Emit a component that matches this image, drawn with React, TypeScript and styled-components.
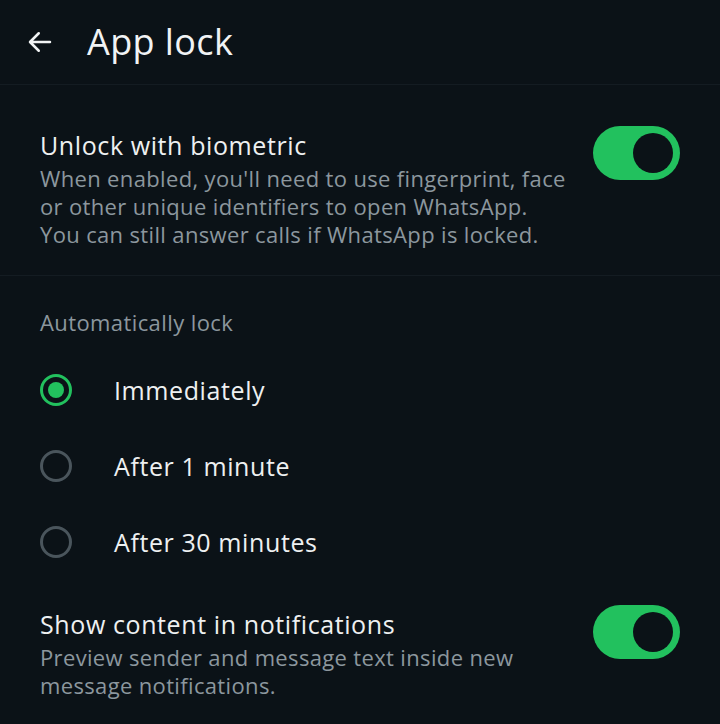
import React, { useState } from "react";
import styled, { createGlobalStyle } from "styled-components";

const GlobalStyle = createGlobalStyle`
  html, body {
    margin: 0;
    padding: 0;
    background: #0b1217;
  }
  body {
    font-family: "Open Sans", Roboto, "Liberation Sans", sans-serif;
    -webkit-font-smoothing: antialiased;
  }
`;

const Screen = styled.div`
  width: 720px;
  height: 724px;
  background: #0b1217;
  color: #e9edef;
  overflow: hidden;
  display: flex;
  flex-direction: column;
`;

const Header = styled.header`
  height: 85px;
  display: flex;
  align-items: center;
  gap: 31px;
  padding: 0 0 0 24px;
  border-bottom: 1px solid #141c22;
  box-sizing: border-box;
`;

const BackButton = styled.button`
  width: 32px;
  height: 32px;
  padding: 0;
  border: none;
  background: none;
  color: #f1f3f4;
  display: flex;
  align-items: center;
  justify-content: center;
`;

const Title = styled.h1`
  margin: 0;
  font-size: 36px;
  line-height: 40px;
  font-weight: 400;
  letter-spacing: 0.4px;
  color: #f1f3f4;
`;

const Section = styled.section<{ divided?: boolean }>`
  display: flex;
  flex-direction: column;
  border-bottom: ${(p) => (p.divided ? "1px solid #141c22" : "none")};
`;

const ToggleRow = styled.div<{ top: number; bottom: number }>`
  display: flex;
  align-items: flex-start;
  justify-content: space-between;
  padding: ${(p) => p.top}px 40px ${(p) => p.bottom}px 40px;
`;

const TextBlock = styled.div`
  display: flex;
  flex-direction: column;
  padding-top: 4px;
`;

const ItemTitle = styled.div`
  font-size: 25px;
  line-height: 30px;
  letter-spacing: 0.6px;
  color: #eef0f1;
`;

const ItemDesc = styled.div`
  margin-top: 4px;
  font-size: 22px;
  line-height: 28px;
  letter-spacing: 0.35px;
  color: #8c979e;
`;

const Track = styled.button<{ on: boolean }>`
  flex: none;
  width: 87px;
  height: 54px;
  border-radius: 27px;
  border: none;
  padding: 0 7px;
  background: ${(p) => (p.on ? "#22c15e" : "#3b4a54")};
  display: flex;
  align-items: center;
  justify-content: ${(p) => (p.on ? "flex-end" : "flex-start")};
  cursor: pointer;
`;

const Thumb = styled.span`
  width: 40px;
  height: 40px;
  border-radius: 50%;
  background: #0b1217;
`;

const GroupLabel = styled.div`
  padding: 31px 40px 15px;
  font-size: 22px;
  line-height: 30px;
  letter-spacing: 0.4px;
  color: #8c979e;
`;

const RadioRow = styled.label`
  height: 76px;
  display: flex;
  align-items: center;
  padding-left: 40px;
  gap: 42px;
  cursor: pointer;
`;

const RadioCircle = styled.span<{ checked: boolean }>`
  width: 32px;
  height: 32px;
  box-sizing: border-box;
  border-radius: 50%;
  border: 3px solid ${(p) => (p.checked ? "#22c15e" : "#4a555c")};
  display: flex;
  align-items: center;
  justify-content: center;

  &::after {
    content: "";
    width: 16px;
    height: 16px;
    border-radius: 50%;
    background: #22c15e;
    display: ${(p) => (p.checked ? "block" : "none")};
  }
`;

const RadioText = styled.span`
  font-size: 25px;
  line-height: 30px;
  letter-spacing: 0.6px;
  color: #eef0f1;
`;

const Toggle = ({ on, onChange }: { on: boolean; onChange: () => void }) => (
  <Track on={on} onClick={onChange}>
    <Thumb />
  </Track>
);

const options = ["Immediately", "After 1 minute", "After 30 minutes"];

export default function App() {
  const [biometric, setBiometric] = useState(true);
  const [showContent, setShowContent] = useState(true);
  const [lockAfter, setLockAfter] = useState(0);

  return (
    <>
      <GlobalStyle />
      <Screen>
        <Header>
          <BackButton aria-label="Back">
            <svg width="30" height="30" viewBox="0 0 24 24" fill="none">
              <path
                d="M20 12H4.5M11 5l-7 7 7 7"
                stroke="currentColor"
                strokeWidth="2"
                strokeLinecap="round"
                strokeLinejoin="round"
              />
            </svg>
          </BackButton>
          <Title>App lock</Title>
        </Header>

        <Section divided>
          <ToggleRow top={41} bottom={27}>
            <TextBlock>
              <ItemTitle>Unlock with biometric</ItemTitle>
              <ItemDesc>
                When enabled, you'll need to use fingerprint, face
                <br />
                or other unique identifiers to open WhatsApp.
                <br />
                You can still answer calls if WhatsApp is locked.
              </ItemDesc>
            </TextBlock>
            <Toggle on={biometric} onChange={() => setBiometric(!biometric)} />
          </ToggleRow>
        </Section>

        <Section>
          <GroupLabel>Automatically lock</GroupLabel>
          {options.map((opt, i) => (
            <RadioRow key={opt} onClick={() => setLockAfter(i)}>
              <RadioCircle checked={lockAfter === i} />
              <RadioText>{opt}</RadioText>
            </RadioRow>
          ))}
          <ToggleRow top={25} bottom={20}>
            <TextBlock>
              <ItemTitle>Show content in notifications</ItemTitle>
              <ItemDesc>
                Preview sender and message text inside new
                <br />
                message notifications.
              </ItemDesc>
            </TextBlock>
            <Toggle on={showContent} onChange={() => setShowContent(!showContent)} />
          </ToggleRow>
        </Section>
      </Screen>
    </>
  );
}
